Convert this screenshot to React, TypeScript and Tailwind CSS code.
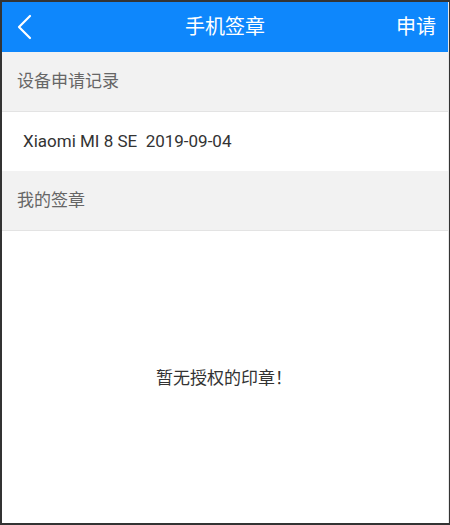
import { type FC } from 'react'

const font = { fontFamily: 'Roboto, "Noto Sans CJK SC", sans-serif' }

const BackIcon: FC = () => (
  <svg width="20" height="26" viewBox="0 0 20 26" fill="none">
    <path d="M14 2 L3 13 L14 24" stroke="#fff" strokeWidth="2.2" strokeLinecap="round" strokeLinejoin="round" />
  </svg>
)

const SectionTitle: FC<{ title: string }> = ({ title }) => (
  <div className="h-[60px] flex items-center pl-[15px] bg-[#f2f2f2] border-b border-[#e3e3e3] text-[17px] text-[#666]">
    {title}
  </div>
)

export default function App() {
  return (
    <div className="w-[450px] h-[525px] bg-[#333] pt-[2px] pl-[2px]" style={font}>
      <div className="w-[446px] h-[521px] bg-white border-r border-[#e8e8e8] box-content flex flex-col">
        <header className="h-[50px] bg-[#0e87fc] flex items-center justify-between relative text-white">
          <div className="pl-[14px] flex items-center">
            <BackIcon />
          </div>
          <div className="absolute left-0 right-0 text-center text-[20px] pointer-events-none">手机签章</div>
          <div className="pr-[12px] text-[20px]">申请</div>
        </header>

        <SectionTitle title="设备申请记录" />
        <div className="h-[59px] flex items-center pl-[21px] text-[17px] text-[#333] bg-white">
          Xiaomi MI 8 SE&nbsp;&nbsp;2019-09-04
        </div>
        <SectionTitle title="我的签章" />

        <div className="flex-1 flex items-center justify-center text-[17px] text-[#333] pt-[3px] pr-[2px]">
          暂无授权的印章！
        </div>
      </div>
    </div>
  )
}
